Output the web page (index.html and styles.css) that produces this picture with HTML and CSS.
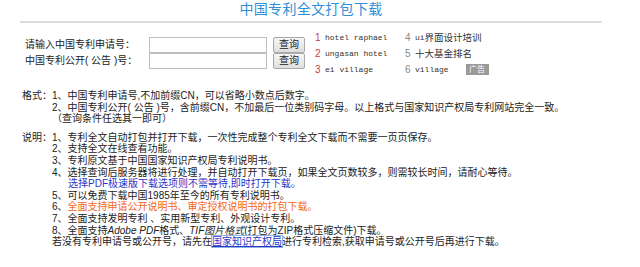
FILE: index.html
```html
<!DOCTYPE html>
<html lang="zh-CN">
<head>
<meta charset="utf-8">
<title>中国专利全文打包下载</title>
<link rel="stylesheet" href="styles.css">
</head>
<body>
<div class="page">
  <h1 class="title">中国专利全文打包下载</h1>
  <div class="rule"></div>
  <div class="search">
    <form class="form">
      <label class="lbl">请输入中国专利申请号：</label>
      <input class="inp" type="text">
      <button class="btn" type="button">查询</button>
      <label class="lbl">中国专利公开( 公告 )号：</label>
      <input class="inp" type="text">
      <button class="btn" type="button">查询</button>
    </form>
    <ul class="hot">
      <li><span class="num red">1</span><span class="en">hotel raphael</span></li>
      <li><span class="num">4</span><span class="en">ui</span><span class="cn">界面设计培训</span></li>
      <li><span class="num red">2</span><span class="en">ungasan hotel</span></li>
      <li><span class="num">5</span><span class="cn">十大基金排名</span></li>
      <li><span class="num red">3</span><span class="en">ei village</span></li>
      <li><span class="num">6</span><span class="en">village</span><span class="ad">广告</span></li>
    </ul>
  </div>
  <div class="notes fmt">
    <div class="head">格式：</div>
    <div class="items">
      <div>1、中国专利申请号,不加前缀CN，可以省略小数点后数字。</div>
      <div>2、中国专利公开( 公告 )号，含前缀CN，不加最后一位类别码字母。以上格式与国家知识产权局专利网站完全一致。</div>
      <div>（查询条件任选其一即可）</div>
    </div>
  </div>
  <div class="notes desc">
    <div class="head">说明：</div>
    <div class="items">
      <div>1、专利全文自动打包并打开下载，一次性完成整个专利全文下载而不需要一页页保存。</div>
      <div>2、支持全文在线查看功能。</div>
      <div>3、专利原文基于中国国家知识产权局专利说明书。</div>
      <div>4、选择查询后服务器将进行处理，并自动打开下载页，如果全文页数较多，则需较长时间，请耐心等待。</div>
      <div class="blue">选择PDF极速版下载选项则不需等待,即时打开下载。</div>
      <div>5、可以免费下载中国1985年至今的所有专利说明书。</div>
      <div>6、<span class="orange">全面支持申请公开说明书、审定授权说明书的打包下载。</span></div>
      <div>7、全面支持发明专利 、实用新型专利、外观设计专利。</div>
      <div>8、全面支持<i>Adobe PDF</i>格式、<i>TIF图片格式</i>(打包为ZIP格式压缩文件)下载。</div>
      <div class="last">若没有专利申请号或公开号，请先在<a href="#" class="link">国家知识产权局</a>进行专利检索,获取申请号或公开号后再进行下载。</div>
    </div>
  </div>
</div>
</body>
</html>
```

FILE: styles.css
```css
html, body {
  margin: 0;
  padding: 0;
  background: #fff;
}
body {
  font-family: "Liberation Sans", "Noto Sans CJK SC", sans-serif;
  font-size: 10px;
  color: #222;
}
.page {
  margin-left: 20px;
  width: 582px;
}
.title {
  margin: 0;
  text-align: center;
  font-size: 14px;
  line-height: 18px;
  font-weight: normal;
  color: #2f8fd8;
  letter-spacing: 0.3px;
}
.rule {
  margin-top: 3px;
  height: 2px;
  background: #dcdcdc;
}
.search {
  display: flex;
  align-items: center;
  margin-top: 6px;
}
.form {
  display: grid;
  grid-template-columns: 118px 118px auto;
  column-gap: 6px;
  align-items: center;
  margin: 0 0 0 5px;
}
.lbl {
  line-height: 16px;
  white-space: nowrap;
}
.inp {
  box-sizing: border-box;
  width: 118px;
  height: 16px;
  margin: 0;
  padding: 0 2px;
  border: 1px solid #bdbdbd;
  background: #fff;
  font-size: 10px;
}
.btn {
  box-sizing: border-box;
  width: 32px;
  height: 16px;
  margin: 0;
  padding: 0;
  border: 1px solid #a9a9a9;
  border-radius: 2px;
  background: linear-gradient(#f7f7f7, #dedede);
  font-family: "Liberation Sans", "Noto Sans CJK SC", sans-serif;
  font-size: 10px;
  line-height: 14px;
  color: #222;
}
.hot {
  list-style: none;
  margin: 0 0 0 10px;
  padding: 0;
  display: grid;
  grid-template-columns: 90px 120px;
}
.hot li {
  display: flex;
  align-items: center;
  height: 16px;
  white-space: nowrap;
}
.num {
  width: 10px;
  font-family: "Liberation Sans", sans-serif;
  font-size: 10px;
  color: #888;
}
.num.red {
  color: #d23a3a;
}
.en {
  font-family: "Liberation Mono", monospace;
  font-size: 8px;
  color: #333;
}
.cn {
  font-size: 9.5px;
  color: #333;
}
.ad {
  margin-left: 17px;
  width: 23px;
  height: 11px;
  line-height: 11px;
  text-align: center;
  background: #9a9a9a;
  color: #fff;
  font-size: 8px;
}
.notes {
  display: flex;
  padding-left: 2px;
  line-height: 11.6px;
}
.fmt {
  margin-top: 13px;
}
.desc {
  margin-top: 7px;
}
.head {
  width: 30px;
  flex: none;
}
.items div {
  white-space: nowrap;
}
.blue {
  color: #2b35c8;
  padding-left: 16px;
}
.orange {
  color: #f2661d;
}
.link {
  color: #2b35c8;
  text-decoration: underline;
  outline: 1px solid #8fb4e0;
}
i {
  font-style: italic;
}
```
